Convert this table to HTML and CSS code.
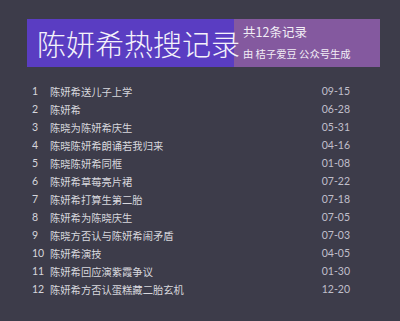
FILE: index.html
```html
<!DOCTYPE html>
<html lang="zh">
<head>
<meta charset="utf-8">
<link rel="stylesheet" href="styles.css">
</head>
<body>
<div class="page">
  <header class="banner">
    <div class="banner-main"><h1 class="title">陈妍希热搜记录</h1></div>
    <div class="banner-side">
      <div class="count">共12条记录</div>
      <div class="credit">由 桔子爱豆 公众号生成</div>
    </div>
  </header>
  <ol class="list">
    <li class="row"><span class="num">1</span><span class="text">陈妍希送儿子上学</span><span class="date">09-15</span></li>
    <li class="row"><span class="num">2</span><span class="text">陈妍希</span><span class="date">06-28</span></li>
    <li class="row"><span class="num">3</span><span class="text">陈晓为陈妍希庆生</span><span class="date">05-31</span></li>
    <li class="row"><span class="num">4</span><span class="text">陈晓陈妍希朗诵若我归来</span><span class="date">04-16</span></li>
    <li class="row"><span class="num">5</span><span class="text">陈晓陈妍希同框</span><span class="date">01-08</span></li>
    <li class="row"><span class="num">6</span><span class="text">陈妍希草莓亮片裙</span><span class="date">07-22</span></li>
    <li class="row"><span class="num">7</span><span class="text">陈妍希打算生第二胎</span><span class="date">07-18</span></li>
    <li class="row"><span class="num">8</span><span class="text">陈妍希为陈晓庆生</span><span class="date">07-05</span></li>
    <li class="row"><span class="num">9</span><span class="text">陈晓方否认与陈妍希闹矛盾</span><span class="date">07-03</span></li>
    <li class="row"><span class="num">10</span><span class="text">陈妍希演技</span><span class="date">04-05</span></li>
    <li class="row"><span class="num">11</span><span class="text">陈妍希回应演紫霞争议</span><span class="date">01-30</span></li>
    <li class="row"><span class="num">12</span><span class="text">陈妍希方否认蛋糕藏二胎玄机</span><span class="date">12-20</span></li>
  </ol>
</div>
</body>
</html>
```
FILE: styles.css
```css
html, body {
  margin: 0;
  padding: 0;
  background: #3d3c4a;
}
.page {
  width: 400px;
  height: 321px;
  padding-top: 19px;
  box-sizing: border-box;
  font-family: "Noto Sans CJK SC", "Noto Sans", sans-serif;
}
.banner {
  display: flex;
  margin-left: 27px;
  width: 353px;
  height: 48px;
}
.banner-main {
  width: 207px;
  background: #5a3dc2;
  padding-left: 10px;
  box-sizing: border-box;
  display: flex;
  align-items: center;
  position: relative;
  z-index: 1;
}
.title {
  margin: 0;
  font-size: 29px;
  font-weight: 300;
  color: #f4f2fa;
  white-space: nowrap;
  line-height: 1;
}
.banner-side {
  flex: 1;
  background: #84599f;
  padding-left: 9px;
  padding-bottom: 1px;
  display: flex;
  flex-direction: column;
  justify-content: center;
  color: #f2eef6;
}
.count {
  font-size: 12.5px;
  line-height: 14px;
}
.credit {
  font-size: 10.3px;
  line-height: 13px;
  margin-top: 8px;
}
.list {
  list-style: none;
  margin: 15px 0 0 0;
  padding: 0;
}
.row {
  display: grid;
  grid-template-columns: 18px 1fr auto;
  height: 18px;
  align-items: center;
  margin-left: 32px;
  width: 318px;
}
.num {
  font-family: Lato, "Open Sans", sans-serif;
  font-size: 10.5px;
  color: #d6d6dc;
}
.text {
  font-size: 10.3px;
  color: #d8d8de;
  white-space: nowrap;
}
.date {
  font-family: Lato, "Open Sans", sans-serif;
  font-size: 10.5px;
  color: #c0bfca;
}
```
